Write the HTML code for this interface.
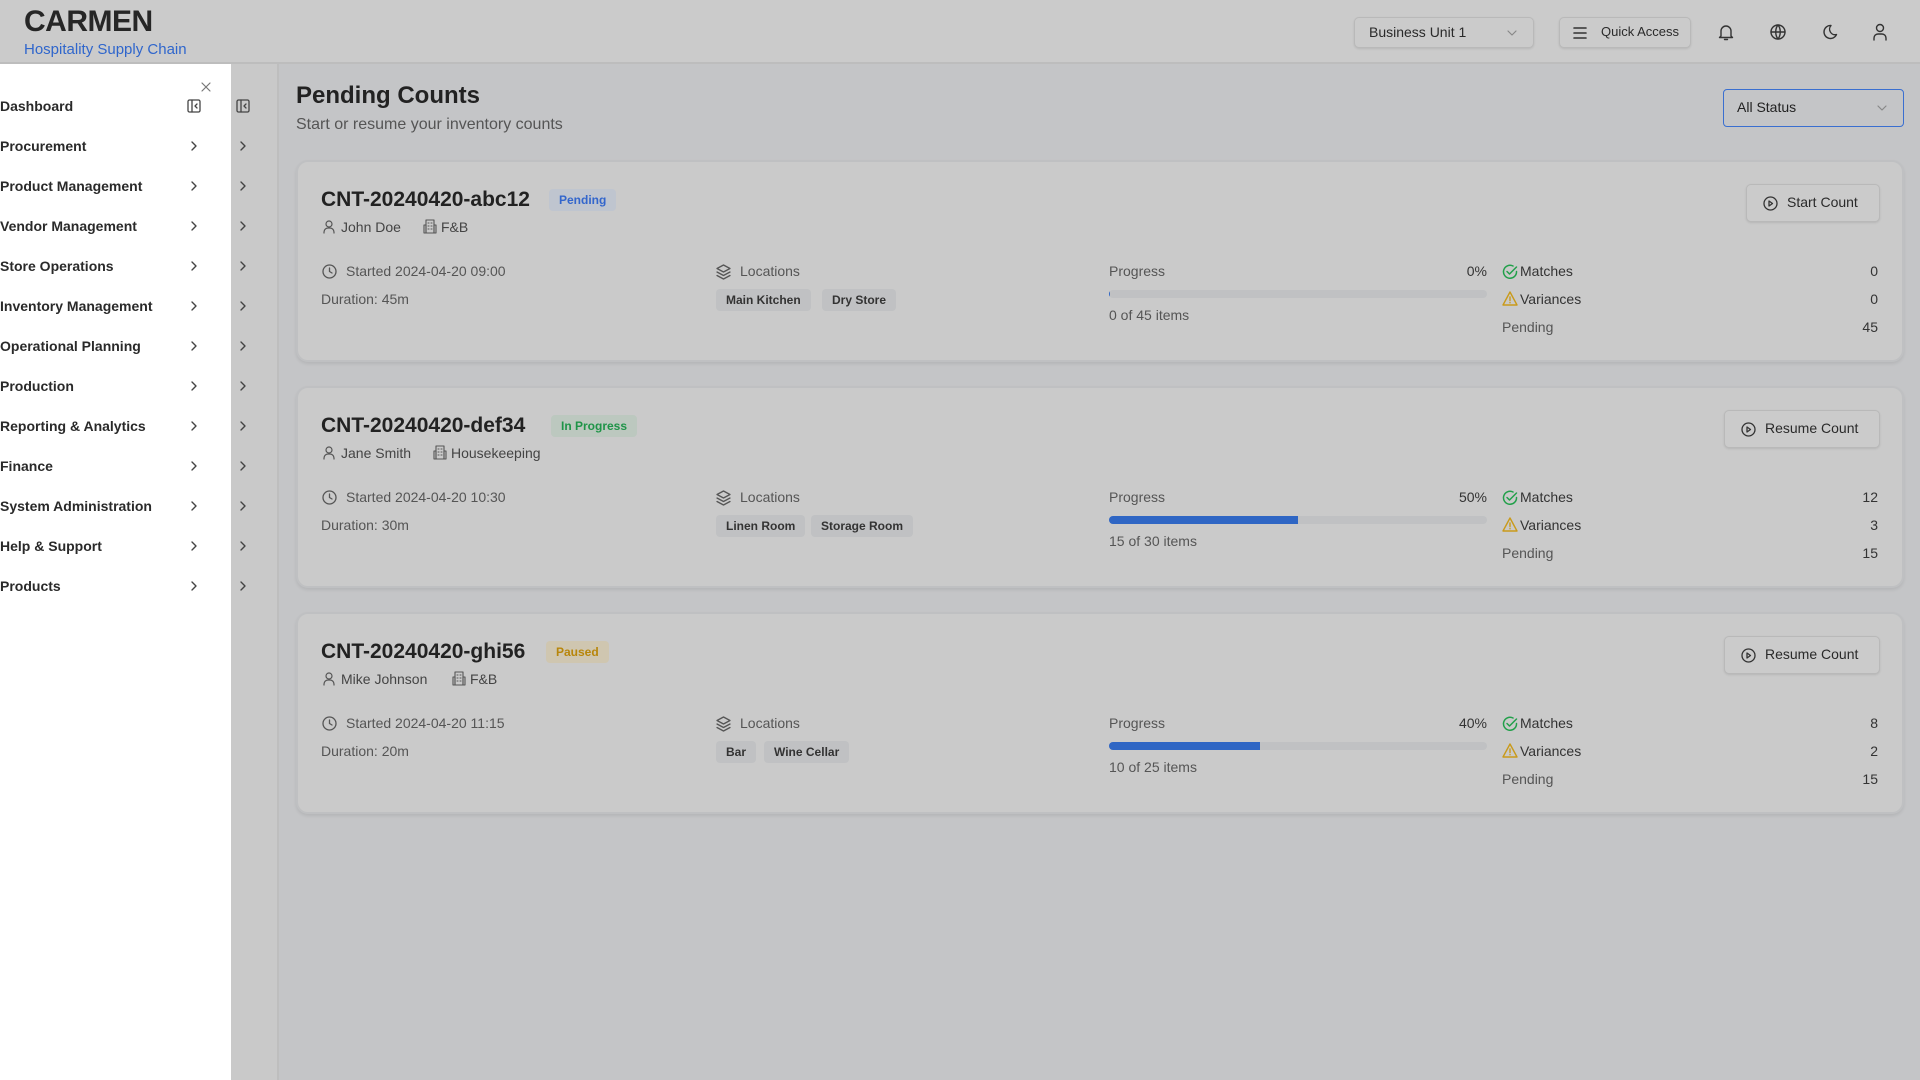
<!DOCTYPE html>
<html><head><meta charset="utf-8"><style>
*{box-sizing:border-box;margin:0;padding:0}
body{width:1920px;height:1080px;overflow:hidden;background:#c4c5c7;font-family:"Liberation Sans",Arial,sans-serif;color:#262626;position:relative}
.abs{position:absolute}
.hdr{left:0;top:0;width:1920px;height:64px;background:#cbcbcb;border-bottom:2px solid #bdbdbd}
.side{left:0;top:64px;width:231px;height:1016px;background:#fff}
.strip{left:231px;top:64px;width:48px;height:1016px;background:#c9c9c9;border-right:2px solid #bebebe}
.nav{position:absolute;left:0;font-size:14px;font-weight:bold;color:#2a2a2a;line-height:20px}
.card{position:absolute;left:296px;width:1608px;background:#cacaca;border:2px solid #bfc0c2;border-radius:12px;box-shadow:0 2px 3px rgba(0,0,0,.08)}
.t{position:absolute;white-space:nowrap}
.title{font-size:21px;font-weight:bold;color:#222}
.badge{position:absolute;font-size:12px;font-weight:bold;padding:0 10px;height:22px;line-height:22px;border-radius:4px}
.meta{font-size:14px;color:#444}
.g{color:#555;font-size:14px}
.tag{position:absolute;font-size:12px;font-weight:bold;color:#333;background:#c0c1c3;border-radius:4px;height:22px;line-height:22px;padding:0 10px}
.bar{position:absolute;height:8px;background:#c0c1c3;border-radius:4px;overflow:hidden;width:378px}
.bar i{display:block;height:8px;background:#2f66c4}
.btn{position:absolute;height:38px;border:1.5px solid #b9b9b9;border-radius:5px;background:#cbcbcb;box-shadow:0 1px 2px rgba(0,0,0,.1);font-size:14px;color:#2a2a2a;line-height:35px;white-space:nowrap}
.hb{height:31px;line-height:28px}
svg{position:absolute;fill:none;stroke-linecap:round;stroke-linejoin:round}
</style></head><body>
<div class="abs hdr"></div>
<div class="t" style="left:24px;top:5px;font-size:30px;font-weight:bold;color:#262626;letter-spacing:-.5px">CARMEN</div>
<div class="t" style="left:24px;top:41px;font-size:15px;color:#2f66cc">Hospitality Supply Chain</div>

<div class="btn hb" style="left:1354px;top:17px;width:180px;padding-left:14px;font-size:14px">Business Unit 1
<svg style="left:152px;top:11px" width="10" height="8" viewBox="0 0 10 8" stroke="#888" stroke-width="1.2"><path d="M1 2l4 4 4-4"/></svg></div>
<div class="btn hb" style="left:1559px;top:17px;width:132px;padding-left:41px;font-size:13px">Quick Access
<svg style="left:13px;top:9px" width="14" height="12" viewBox="0 0 14 12" stroke="#333" stroke-width="1.6"><path d="M1 1h12M1 6h12M1 11h12"/></svg></div>
<svg style="left:1718px;top:23px" width="16" height="18" viewBox="0 0 16 18" stroke="#333" stroke-width="1.4"><path d="M3 13V8a5 5 0 0 1 10 0v5l1.5 1.5h-13z"/><path d="M6.5 16.5h3"/></svg>
<svg style="left:1770px;top:24px" width="16" height="16" viewBox="0 0 16 16" stroke="#333" stroke-width="1.4"><circle cx="8" cy="8" r="7"/><path d="M1 8h14M8 1c-3 3.5-3 10.5 0 14M8 1c3 3.5 3 10.5 0 14"/></svg>
<svg style="left:1822px;top:24px" width="16" height="16" viewBox="0 0 16 16" stroke="#333" stroke-width="1.4"><path d="M9 1.5a6.5 6.5 0 1 0 5.5 9A5.5 5.5 0 0 1 9 1.5z"/></svg>
<svg style="left:1873px;top:23px" width="14" height="18" viewBox="0 0 14 18" stroke="#333" stroke-width="1.4"><circle cx="7" cy="5" r="3.5"/><path d="M1 17v-2a4 4 0 0 1 4-4h4a4 4 0 0 1 4 4v2"/></svg>

<div class="abs side"></div>
<div class="abs strip"></div>
<svg style="left:201px;top:82px" width="10" height="10" viewBox="0 0 10 10" stroke="#777" stroke-width="1.2"><path d="M1 1l8 8M9 1l-8 8"/></svg>
<svg style="left:187px;top:99px" width="14" height="14" viewBox="0 0 14 14" stroke="#444" stroke-width="1.3"><rect x="1" y="1" width="12" height="12" rx="1.5"/><path d="M5 1v12M10 5l-2 2 2 2"/></svg>
<svg style="left:236px;top:99px" width="14" height="14" viewBox="0 0 14 14" stroke="#444" stroke-width="1.3"><rect x="1" y="1" width="12" height="12" rx="1.5"/><path d="M5 1v12M10 5l-2 2 2 2"/></svg>
<div class="nav" style="top:96px">Dashboard</div>
<div class="nav" style="top:136px">Procurement</div>
<div class="nav" style="top:176px">Product Management</div>
<div class="nav" style="top:216px">Vendor Management</div>
<div class="nav" style="top:256px">Store Operations</div>
<div class="nav" style="top:296px">Inventory Management</div>
<div class="nav" style="top:336px">Operational Planning</div>
<div class="nav" style="top:376px">Production</div>
<div class="nav" style="top:416px">Reporting &amp; Analytics</div>
<div class="nav" style="top:456px">Finance</div>
<div class="nav" style="top:496px">System Administration</div>
<div class="nav" style="top:536px">Help &amp; Support</div>
<div class="nav" style="top:576px">Products</div>
<svg style="left:0;top:0" width="260" height="600" viewBox="0 0 260 600" stroke="#444" stroke-width="1.4">
<path d="M192 142l4 4-4 4M241 142l4 4-4 4"/><path d="M192 182l4 4-4 4M241 182l4 4-4 4"/><path d="M192 222l4 4-4 4M241 222l4 4-4 4"/><path d="M192 262l4 4-4 4M241 262l4 4-4 4"/><path d="M192 302l4 4-4 4M241 302l4 4-4 4"/><path d="M192 342l4 4-4 4M241 342l4 4-4 4"/><path d="M192 382l4 4-4 4M241 382l4 4-4 4"/><path d="M192 422l4 4-4 4M241 422l4 4-4 4"/><path d="M192 462l4 4-4 4M241 462l4 4-4 4"/><path d="M192 502l4 4-4 4M241 502l4 4-4 4"/><path d="M192 542l4 4-4 4M241 542l4 4-4 4"/><path d="M192 582l4 4-4 4M241 582l4 4-4 4"/>
</svg>

<div class="t" style="left:296px;top:82px;font-size:24px;font-weight:bold;color:#222">Pending Counts</div>
<div class="t" style="left:296px;top:116px;font-size:16px;color:#555">Start or resume your inventory counts</div>
<div class="abs" style="left:1723px;top:89px;width:181px;height:38px;border:1.5px solid #3a6fd0;border-radius:4px;font-size:14px;line-height:35px;padding-left:13px;color:#222">All Status
<svg style="left:153px;top:14px" width="10" height="8" viewBox="0 0 10 8" stroke="#888" stroke-width="1.2"><path d="M1 2l4 4 4-4"/></svg></div>

<div class="card" style="top:160px;height:202px">
 <div class="t title" style="left:23px;top:26px">CNT-20240420-abc12</div>
 <div class="badge" style="left:251px;top:27px;background:#bfc5cf;color:#3366cc">Pending</div>
 <svg style="left:25px;top:58px" width="12" height="14" viewBox="0 0 12 14" stroke="#555" stroke-width="1.2"><circle cx="6" cy="4" r="3"/><path d="M1 13v-1a4 4 0 0 1 4-4h2a4 4 0 0 1 4 4v1"/></svg>
 <div class="t meta" style="left:43px;top:57px">John Doe</div>
 <svg style="left:125px;top:57px" width="14" height="15" viewBox="0 0 14 15" stroke="#555" stroke-width="1.1"><rect x="3" y="1" width="8" height="13"/><path d="M1 6h2v8H1zM11 6h2v8h-2zM5 4h1M8 4h1M5 7h1M8 7h1M5 10h1M8 10h1"/></svg>
 <div class="t meta" style="left:143px;top:57px">F&amp;B</div>
 <svg style="left:24px;top:102px" width="15" height="15" viewBox="0 0 15 15" stroke="#555" stroke-width="1.3"><circle cx="7.5" cy="7.5" r="6.5"/><path d="M7.5 4v3.5l2.5 1.5"/></svg>
 <div class="t g" style="left:48px;top:101px">Started 2024-04-20 09:00</div>
 <div class="t g" style="left:23px;top:129px">Duration: 45m</div>
 <svg style="left:418px;top:102px" width="15" height="16" viewBox="0 0 15 16" stroke="#555" stroke-width="1.3"><path d="M7.5 1l6.5 3.5-6.5 3.5L1 4.5z M1 8l6.5 3.5L14 8M1 11.5L7.5 15l6.5-3.5"/></svg>
 <div class="t g" style="left:442px;top:101px">Locations</div>
 <div class="tag" style="left:418px;top:127px">Main Kitchen</div>
 <div class="tag" style="left:524px;top:127px">Dry Store</div>
 <div class="t g" style="left:811px;top:101px">Progress</div>
 <div class="t" style="left:1155px;top:101px;font-size:14px;color:#333;width:34px;text-align:right">0%</div>
 <div class="bar" style="left:811px;top:128px"><i style="width:1px"></i></div>
 <div class="t g" style="left:811px;top:145px">0 of 45 items</div>
 <svg style="left:1204px;top:102px" width="16" height="16" viewBox="0 0 16 16" stroke="#22a04a" stroke-width="1.5"><path d="M14.5 7.5A6.5 6.5 0 1 1 11 2"/><path d="M5 7.5l2.5 2.5L14.5 3"/></svg>
 <div class="t" style="left:1222px;top:101px;font-size:14px;color:#333">Matches</div>
 <div class="t" style="left:1540px;top:101px;font-size:14px;color:#333;width:40px;text-align:right">0</div>
 <svg style="left:1204px;top:129px" width="16" height="15" viewBox="0 0 16 15" stroke="#c99a1a" stroke-width="1.4"><path d="M8 1L15 14H1z"/><path d="M8 6v3.5M8 11.5v.3"/></svg>
 <div class="t" style="left:1222px;top:129px;font-size:14px;color:#333">Variances</div>
 <div class="t" style="left:1540px;top:129px;font-size:14px;color:#333;width:40px;text-align:right">0</div>
 <div class="t g" style="left:1204px;top:157px">Pending</div>
 <div class="t" style="left:1540px;top:157px;font-size:14px;color:#333;width:40px;text-align:right">45</div>
 <div class="btn" style="left:1448px;top:22px;width:134px;padding-left:40px">Start Count
 <svg style="left:16px;top:11px" width="15" height="15" viewBox="0 0 15 15" stroke="#333" stroke-width="1.3"><circle cx="7.5" cy="7.5" r="6.5"/><path d="M6 5l3.5 2.5L6 10z"/></svg></div>
</div>

<div class="card" style="top:386px;height:202px">
 <div class="t title" style="left:23px;top:26px">CNT-20240420-def34</div>
 <div class="badge" style="left:253px;top:27px;background:#bcc8bf;color:#1f9448">In Progress</div>
 <svg style="left:25px;top:58px" width="12" height="14" viewBox="0 0 12 14" stroke="#555" stroke-width="1.2"><circle cx="6" cy="4" r="3"/><path d="M1 13v-1a4 4 0 0 1 4-4h2a4 4 0 0 1 4 4v1"/></svg>
 <div class="t meta" style="left:43px;top:57px">Jane Smith</div>
 <svg style="left:135px;top:57px" width="14" height="15" viewBox="0 0 14 15" stroke="#555" stroke-width="1.1"><rect x="3" y="1" width="8" height="13"/><path d="M1 6h2v8H1zM11 6h2v8h-2zM5 4h1M8 4h1M5 7h1M8 7h1M5 10h1M8 10h1"/></svg>
 <div class="t meta" style="left:153px;top:57px">Housekeeping</div>
 <svg style="left:24px;top:102px" width="15" height="15" viewBox="0 0 15 15" stroke="#555" stroke-width="1.3"><circle cx="7.5" cy="7.5" r="6.5"/><path d="M7.5 4v3.5l2.5 1.5"/></svg>
 <div class="t g" style="left:48px;top:101px">Started 2024-04-20 10:30</div>
 <div class="t g" style="left:23px;top:129px">Duration: 30m</div>
 <svg style="left:418px;top:102px" width="15" height="16" viewBox="0 0 15 16" stroke="#555" stroke-width="1.3"><path d="M7.5 1l6.5 3.5-6.5 3.5L1 4.5z M1 8l6.5 3.5L14 8M1 11.5L7.5 15l6.5-3.5"/></svg>
 <div class="t g" style="left:442px;top:101px">Locations</div>
 <div class="tag" style="left:418px;top:127px">Linen Room</div>
 <div class="tag" style="left:513px;top:127px">Storage Room</div>
 <div class="t g" style="left:811px;top:101px">Progress</div>
 <div class="t" style="left:1145px;top:101px;font-size:14px;color:#333;width:44px;text-align:right">50%</div>
 <div class="bar" style="left:811px;top:128px"><i style="width:189px"></i></div>
 <div class="t g" style="left:811px;top:145px">15 of 30 items</div>
 <svg style="left:1204px;top:102px" width="16" height="16" viewBox="0 0 16 16" stroke="#22a04a" stroke-width="1.5"><path d="M14.5 7.5A6.5 6.5 0 1 1 11 2"/><path d="M5 7.5l2.5 2.5L14.5 3"/></svg>
 <div class="t" style="left:1222px;top:101px;font-size:14px;color:#333">Matches</div>
 <div class="t" style="left:1540px;top:101px;font-size:14px;color:#333;width:40px;text-align:right">12</div>
 <svg style="left:1204px;top:129px" width="16" height="15" viewBox="0 0 16 15" stroke="#c99a1a" stroke-width="1.4"><path d="M8 1L15 14H1z"/><path d="M8 6v3.5M8 11.5v.3"/></svg>
 <div class="t" style="left:1222px;top:129px;font-size:14px;color:#333">Variances</div>
 <div class="t" style="left:1540px;top:129px;font-size:14px;color:#333;width:40px;text-align:right">3</div>
 <div class="t g" style="left:1204px;top:157px">Pending</div>
 <div class="t" style="left:1540px;top:157px;font-size:14px;color:#333;width:40px;text-align:right">15</div>
 <div class="btn" style="left:1426px;top:22px;width:156px;padding-left:40px">Resume Count
 <svg style="left:16px;top:11px" width="15" height="15" viewBox="0 0 15 15" stroke="#333" stroke-width="1.3"><circle cx="7.5" cy="7.5" r="6.5"/><path d="M6 5l3.5 2.5L6 10z"/></svg></div>
</div>

<div class="card" style="top:612px;height:202px">
 <div class="t title" style="left:23px;top:26px">CNT-20240420-ghi56</div>
 <div class="badge" style="left:248px;top:27px;background:#cfc6b0;color:#b8860b">Paused</div>
 <svg style="left:25px;top:58px" width="12" height="14" viewBox="0 0 12 14" stroke="#555" stroke-width="1.2"><circle cx="6" cy="4" r="3"/><path d="M1 13v-1a4 4 0 0 1 4-4h2a4 4 0 0 1 4 4v1"/></svg>
 <div class="t meta" style="left:43px;top:57px">Mike Johnson</div>
 <svg style="left:154px;top:57px" width="14" height="15" viewBox="0 0 14 15" stroke="#555" stroke-width="1.1"><rect x="3" y="1" width="8" height="13"/><path d="M1 6h2v8H1zM11 6h2v8h-2zM5 4h1M8 4h1M5 7h1M8 7h1M5 10h1M8 10h1"/></svg>
 <div class="t meta" style="left:172px;top:57px">F&amp;B</div>
 <svg style="left:24px;top:102px" width="15" height="15" viewBox="0 0 15 15" stroke="#555" stroke-width="1.3"><circle cx="7.5" cy="7.5" r="6.5"/><path d="M7.5 4v3.5l2.5 1.5"/></svg>
 <div class="t g" style="left:48px;top:101px">Started 2024-04-20 11:15</div>
 <div class="t g" style="left:23px;top:129px">Duration: 20m</div>
 <svg style="left:418px;top:102px" width="15" height="16" viewBox="0 0 15 16" stroke="#555" stroke-width="1.3"><path d="M7.5 1l6.5 3.5-6.5 3.5L1 4.5z M1 8l6.5 3.5L14 8M1 11.5L7.5 15l6.5-3.5"/></svg>
 <div class="t g" style="left:442px;top:101px">Locations</div>
 <div class="tag" style="left:418px;top:127px">Bar</div>
 <div class="tag" style="left:466px;top:127px">Wine Cellar</div>
 <div class="t g" style="left:811px;top:101px">Progress</div>
 <div class="t" style="left:1145px;top:101px;font-size:14px;color:#333;width:44px;text-align:right">40%</div>
 <div class="bar" style="left:811px;top:128px"><i style="width:151px"></i></div>
 <div class="t g" style="left:811px;top:145px">10 of 25 items</div>
 <svg style="left:1204px;top:102px" width="16" height="16" viewBox="0 0 16 16" stroke="#22a04a" stroke-width="1.5"><path d="M14.5 7.5A6.5 6.5 0 1 1 11 2"/><path d="M5 7.5l2.5 2.5L14.5 3"/></svg>
 <div class="t" style="left:1222px;top:101px;font-size:14px;color:#333">Matches</div>
 <div class="t" style="left:1540px;top:101px;font-size:14px;color:#333;width:40px;text-align:right">8</div>
 <svg style="left:1204px;top:129px" width="16" height="15" viewBox="0 0 16 15" stroke="#c99a1a" stroke-width="1.4"><path d="M8 1L15 14H1z"/><path d="M8 6v3.5M8 11.5v.3"/></svg>
 <div class="t" style="left:1222px;top:129px;font-size:14px;color:#333">Variances</div>
 <div class="t" style="left:1540px;top:129px;font-size:14px;color:#333;width:40px;text-align:right">2</div>
 <div class="t g" style="left:1204px;top:157px">Pending</div>
 <div class="t" style="left:1540px;top:157px;font-size:14px;color:#333;width:40px;text-align:right">15</div>
 <div class="btn" style="left:1426px;top:22px;width:156px;padding-left:40px">Resume Count
 <svg style="left:16px;top:11px" width="15" height="15" viewBox="0 0 15 15" stroke="#333" stroke-width="1.3"><circle cx="7.5" cy="7.5" r="6.5"/><path d="M6 5l3.5 2.5L6 10z"/></svg></div>
</div>
</body></html>
